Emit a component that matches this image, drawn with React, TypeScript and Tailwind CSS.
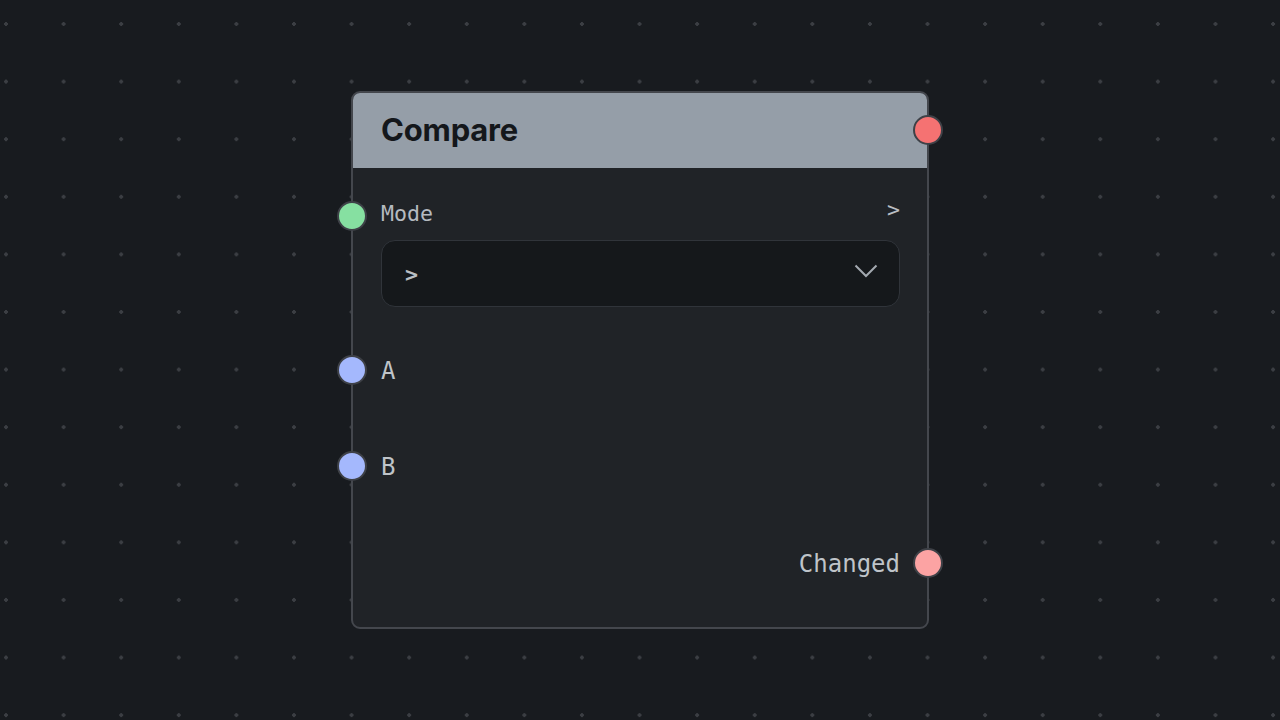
const mono = "font-['DejaVu_Sans_Mono','Liberation_Mono',monospace]";

type PortProps = { side: "left" | "right"; color: string; shift?: string };

// Connector handle that sits over the node border
const Port = ({ side, color, shift = "" }: PortProps) => (
  <span
    className={`absolute top-1/2 h-[30px] w-[30px] -translate-y-1/2 rounded-full border-[2.5px] border-[#3e4147] ${color} ${shift} ${
      side === "left" ? "left-[-44px]" : "right-[-43px]"
    }`}
  />
);

const CompareNode = () => (
  <div className="absolute left-[351px] top-[91px] flex h-[538px] w-[578px] flex-col rounded-[9px] border-2 border-[#44474d] bg-[#202327]">
    <div className="relative flex h-[75px] items-center rounded-t-[7px] bg-[#959ea8] pl-[28px]">
      <span className="font-['Inter',sans-serif] text-[31px] font-bold tracking-[-0.2px] text-[#14171b]">
        Compare
      </span>
      <span className="absolute right-[-16px] top-[22px] h-[30px] w-[30px] rounded-full border-[2.5px] border-[#3e4147] bg-[#f57272]" />
    </div>

    <div className={`flex flex-1 flex-col pl-[28px] pr-[27px] pt-[32px] ${mono}`}>
      <div className="relative flex h-[28px] items-center justify-between">
        <Port side="left" color="bg-[#86e0a1]" shift="mt-[2px]" />
        <span className="text-[21.6px] text-[#b5bac0]">Mode</span>
        <span className="-mt-[7px] text-[21.6px] text-[#b9bec3]">&gt;</span>
      </div>

      <button className="mt-[12px] flex h-[67px] items-center justify-between rounded-[14px] border border-[#30343a] bg-[#15181b] pl-[23px] pr-[21px]">
        <span className="pt-[4px] text-[21.6px] font-bold text-[#b9bec3]">&gt;</span>
        <svg width="24" height="14" viewBox="0 0 24 14" fill="none" className="-mt-[5px]">
          <path d="M1.5 1.5 L12 12 L22.5 1.5" stroke="#a3a9b0" strokeWidth="2" />
        </svg>
      </button>

      <div className="relative mt-[50px] flex h-[28px] items-center">
        <Port side="left" color="bg-[#a4b8fd]" shift="-mt-[1px]" />
        <span className="text-[24px] text-[#bfc4c9]">A</span>
      </div>

      <div className="relative mt-[68px] flex h-[28px] items-center">
        <Port side="left" color="bg-[#a4b8fd]" shift="-mt-[1px]" />
        <span className="text-[24px] text-[#bfc4c9]">B</span>
      </div>

      <div className="relative mt-[69px] flex h-[28px] items-center justify-end">
        <span className="text-[24px] text-[#bfc4c9]">Changed</span>
        <Port side="right" color="bg-[#fca3a3]" shift="-mt-[1px]" />
      </div>
    </div>
  </div>
);

export default function App() {
  return (
    <div className="relative h-[720px] w-[1280px] overflow-hidden bg-[#181b1f] bg-[radial-gradient(circle,#3b3e43_1.6px,transparent_2px)] bg-[length:57.6px_57.6px] bg-[position:-22.8px_-4.8px]">
      <CompareNode />
    </div>
  );
}
